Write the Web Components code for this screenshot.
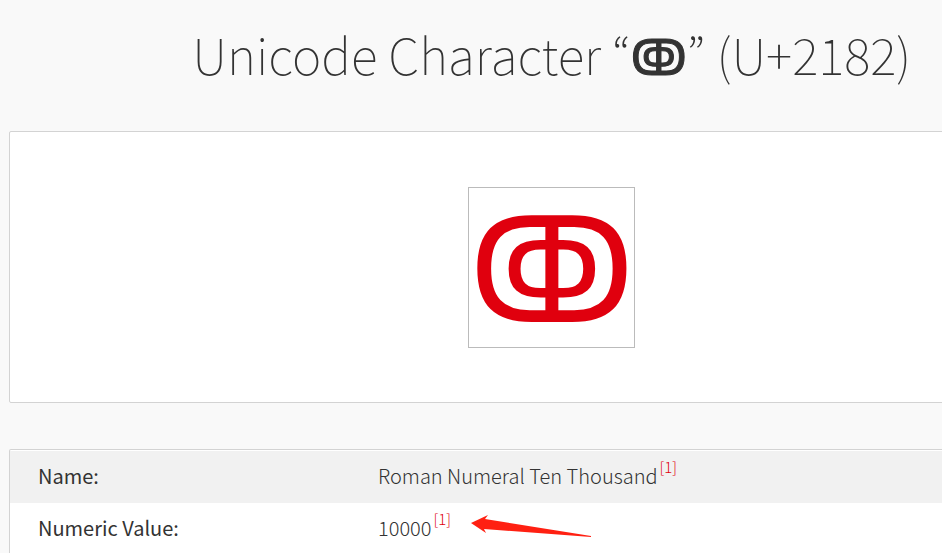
<!DOCTYPE html>
<html lang="en">
<head>
<meta charset="utf-8">
<title>Unicode Character “ↂ” (U+2182)</title>
<style>
html { overflow: hidden; }
body { margin: 0; background: #f9f9f9; color: #333; font-family: "Noto Sans CJK KR", "Noto Sans", sans-serif; }
</style>
</head>
<body>
<character-page></character-page>
<script>
class CharacterPage extends HTMLElement {
  constructor() {
    super();
    this.attachShadow({ mode: "open" }).innerHTML = `
      <style>
        :host { display: block; box-sizing: border-box; width: 116.2%; padding: 17px 0 0 9px; }
        h1 { margin: 0 0 42px; text-align: center; font-size: 50px; line-height: 72px; font-weight: 100; white-space: nowrap; }
        h1 span { font-family: "DejaVu Sans Condensed", "DejaVu Sans", sans-serif; font-weight: 400; font-size: 50px; line-height: 1; -webkit-text-stroke: 1px; }
      </style>
      <h1>Unicode Character “<span>ↂ</span>” (U+2182)</h1>
      <glyph-panel>ↂ</glyph-panel>
      <property-table></property-table>`;
  }
}
class GlyphPanel extends HTMLElement {
  constructor() {
    super();
    this.attachShadow({ mode: "open" }).innerHTML = `
      <style>
        :host { display: flex; justify-content: center; padding: 55px 0 54px; margin-bottom: 46px;
          background: #fff; border: 1px solid #d3d3d3; border-radius: 2px; }
        div { border: 1px solid #bbb; color: #e0000e; height: 159px;
          font: 400 147px/168px "DejaVu Sans Condensed", "DejaVu Sans", sans-serif; }
      </style>
      <div><slot></slot></div>`;
  }
}
class PropertyTable extends HTMLElement {
  constructor() {
    super();
    this.attachShadow({ mode: "open" }).innerHTML = `
      <style>
        :host { display: block; background: #fff; border: 1px solid #d3d3d3; border-bottom: 0; border-radius: 2px; padding-top: 1px; }
        table { width: 100%; border-collapse: collapse; table-layout: fixed; font-size: 20px; line-height: 28px; }
        th, td { padding: 11px 0 13px; text-align: left; vertical-align: top; }
        th { width: 340px; padding-left: 28px; font-weight: 400; }
        td { font-weight: 300; }
        tr:first-child { background: #f1f1f1; }
        .value { display: flex; align-items: flex-start; }
      </style>
      <table>
        <tr><th scope="row">Name:</th><td><div class="value">Roman Numeral Ten Thousand<source-note></source-note></div></td></tr>
        <tr><th scope="row">Numeric Value:</th><td><div class="value">10000<source-note></source-note><red-arrow></red-arrow></div></td></tr>
      </table>`;
  }
}
class SourceNote extends HTMLElement {
  constructor() {
    super();
    this.attachShadow({ mode: "open" }).innerHTML = `
      <style>
        :host { display: block; margin: -5px 0 0 2px; font-size: 15px; line-height: 20px; }
        a { color: #e0000e; text-decoration: none; }
      </style>
      <a href="#source-1">[1]</a>`;
  }
}
class RedArrow extends HTMLElement {
  constructor() {
    super();
    this.attachShadow({ mode: "open" }).innerHTML = `
      <style>:host { display: block; margin-left: 20px; height: 24px; } svg { display: block; }</style>
      <svg width="121" height="24" viewBox="0 0 121 24" aria-hidden="true">
        <path fill="#ff2012" d="M0 9L17 1L14 5L120 22L120 23L13 15L15 19Z"/>
      </svg>`;
  }
}
customElements.define("red-arrow", RedArrow);
customElements.define("source-note", SourceNote);
customElements.define("property-table", PropertyTable);
customElements.define("glyph-panel", GlyphPanel);
customElements.define("character-page", CharacterPage);
</script>
</body>
</html>
